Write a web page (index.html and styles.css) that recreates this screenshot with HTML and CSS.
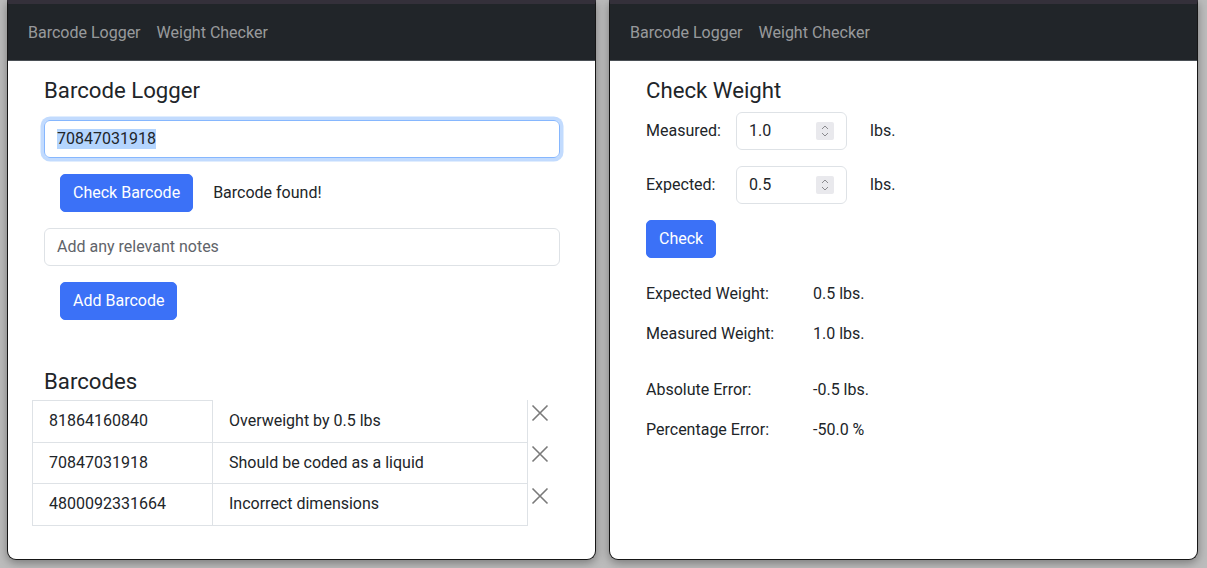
FILE: index.html
```html
<!DOCTYPE html>
<html lang="en">
<head>
<meta charset="utf-8">
<title>Barcode Logger / Weight Checker</title>
<link rel="stylesheet" href="styles.css">
</head>
<body>
<div class="desk">
  <section class="window">
    <nav class="navbar">
      <a class="nav-link">Barcode Logger</a>
      <a class="nav-link">Weight Checker</a>
    </nav>
    <main class="content">
      <h4 class="title">Barcode Logger</h4>
      <div class="field focused"><span class="sel">70847031918</span></div>
      <div class="btn-row">
        <button class="btn">Check Barcode</button>
        <span class="status">Barcode found!</span>
      </div>
      <div class="field"><span class="placeholder">Add any relevant notes</span></div>
      <div class="btn-row">
        <button class="btn">Add Barcode</button>
      </div>
      <h4 class="title list-title">Barcodes</h4>
      <table class="codes">
        <tr>
          <td class="code">81864160840</td>
          <td class="note first">Overweight by 0.5 lbs</td>
          <td class="del"><svg width="18" height="18" viewBox="0 0 18 18"><path d="M1.5 1.5 L16.5 16.5 M16.5 1.5 L1.5 16.5" stroke="#7a7a7a" stroke-width="1.6" fill="none"/></svg></td>
        </tr>
        <tr>
          <td class="code">70847031918</td>
          <td class="note">Should be coded as a liquid</td>
          <td class="del"><svg width="18" height="18" viewBox="0 0 18 18"><path d="M1.5 1.5 L16.5 16.5 M16.5 1.5 L1.5 16.5" stroke="#7a7a7a" stroke-width="1.6" fill="none"/></svg></td>
        </tr>
        <tr>
          <td class="code">4800092331664</td>
          <td class="note">Incorrect dimensions</td>
          <td class="del"><svg width="18" height="18" viewBox="0 0 18 18"><path d="M1.5 1.5 L16.5 16.5 M16.5 1.5 L1.5 16.5" stroke="#7a7a7a" stroke-width="1.6" fill="none"/></svg></td>
        </tr>
      </table>
    </main>
  </section>

  <section class="window">
    <nav class="navbar">
      <a class="nav-link">Barcode Logger</a>
      <a class="nav-link">Weight Checker</a>
    </nav>
    <main class="content">
      <h4 class="title tight">Check Weight</h4>
      <div class="form-row">
        <span class="label">Measured:</span>
        <div class="num-field">
          <span class="num-value">1.0</span>
          <span class="spin"><svg width="18" height="18" viewBox="0 0 18 18"><path d="M6 7 L9 4 L12 7 M6 11 L9 14 L12 11" stroke="#8a8a8e" stroke-width="1" fill="none"/></svg></span>
        </div>
        <span class="unit">lbs.</span>
      </div>
      <div class="form-row">
        <span class="label">Expected:</span>
        <div class="num-field">
          <span class="num-value">0.5</span>
          <span class="spin"><svg width="18" height="18" viewBox="0 0 18 18"><path d="M6 7 L9 4 L12 7 M6 11 L9 14 L12 11" stroke="#8a8a8e" stroke-width="1" fill="none"/></svg></span>
        </div>
        <span class="unit">lbs.</span>
      </div>
      <button class="btn">Check</button>
      <div class="results">
        <div class="res-row"><span class="res-label">Expected Weight:</span><span>0.5 lbs.</span></div>
        <div class="res-row"><span class="res-label">Measured Weight:</span><span>1.0 lbs.</span></div>
        <div class="res-row gap"><span class="res-label">Absolute Error:</span><span>-0.5 lbs.</span></div>
        <div class="res-row"><span class="res-label">Percentage Error:</span><span>-50.0 %</span></div>
      </div>
    </main>
  </section>
</div>
</body>
</html>
```

FILE: styles.css
```css
* { box-sizing: border-box; }
html, body { margin: 0; padding: 0; }
body {
  background: #bcbcbc;
  font-family: Roboto, "Liberation Sans", sans-serif;
  font-size: 16px;
  line-height: 24px;
  color: #212529;
  height: 568px;
  overflow: hidden;
}
.desk {
  display: flex;
  gap: 13px;
  padding-left: 7px;
}
.window {
  width: 589px;
  height: 560px;
  background: #fff;
  border: 1px solid #161616;
  border-top: 4px solid #34303a;
  border-radius: 0 0 9px 9px;
  box-shadow: 0 3px 10px rgba(0,0,0,0.35);
  overflow: hidden;
  display: flex;
  flex-direction: column;
}
.navbar {
  height: 57px;
  background: #212529;
  border-bottom: 1px solid #4a4f55;
  display: flex;
  align-items: center;
  padding: 2px 12px 0;
}
.nav-link {
  color: rgba(255,255,255,0.55);
  padding: 0 8px;
  font-size: 16px;
}
.content {
  padding: 16px 35px 0 36px;
  display: flex;
  flex-direction: column;
  align-items: flex-start;
}
.title {
  margin: 0 0 16px;
  font-size: 22.2px;
  line-height: 27px;
  font-weight: 400;
}
.title.tight { margin-bottom: 8px; }
.title.list-title { margin-top: 32px; margin-bottom: 5px; }
.field {
  width: 100%;
  height: 38px;
  border: 1px solid #dee2e6;
  border-radius: 6px;
  padding: 6px 12px;
  display: flex;
  align-items: center;
}
.field.focused {
  border-color: #86b7fe;
  box-shadow: 0 0 0 3.5px rgba(13,110,253,0.25);
}
.sel { background: #b4d5fe; line-height: 20px; }
.placeholder { color: #5f646a; }
.btn-row {
  display: flex;
  align-items: center;
  gap: 20px;
  margin: 16px 0 16px 16px;
}
.btn {
  font-family: inherit;
  font-size: 16px;
  line-height: 24px;
  color: #fff;
  background: #3b71f7;
  border: 1px solid #3b71f7;
  border-radius: 5px;
  padding: 6px 12px;
  height: 38px;
}
.codes {
  border-collapse: collapse;
  margin-left: -12px;
}
.codes td {
  padding: 8px 16px;
  line-height: 24.7px;
  vertical-align: top;
}
.codes .code {
  width: 180px;
  border: 1px solid #dee2e6;
}
.codes .note {
  width: 315px;
  border: 1px solid #dee2e6;
}
.codes .note.first { border-top-color: transparent; }
.codes .del {
  padding: 3px 0 0 3px;
  line-height: 0;
}
.form-row {
  display: flex;
  align-items: center;
  margin-bottom: 16px;
}
.label { width: 90px; }
.num-field {
  width: 111px;
  height: 38px;
  border: 1px solid #dee2e6;
  border-radius: 6px;
  padding: 0 12px;
  display: flex;
  align-items: center;
  justify-content: space-between;
}
.spin {
  width: 18px;
  height: 18px;
  background: #e9e9ed;
  border-radius: 2px;
  display: flex;
}
.unit { margin-left: 23px; }
.results {
  margin-top: 24px;
  display: flex;
  flex-direction: column;
  gap: 16px;
}
.res-row { display: flex; }
.res-row.gap { margin-top: 16px; }
.res-label { width: 167px; }
```
